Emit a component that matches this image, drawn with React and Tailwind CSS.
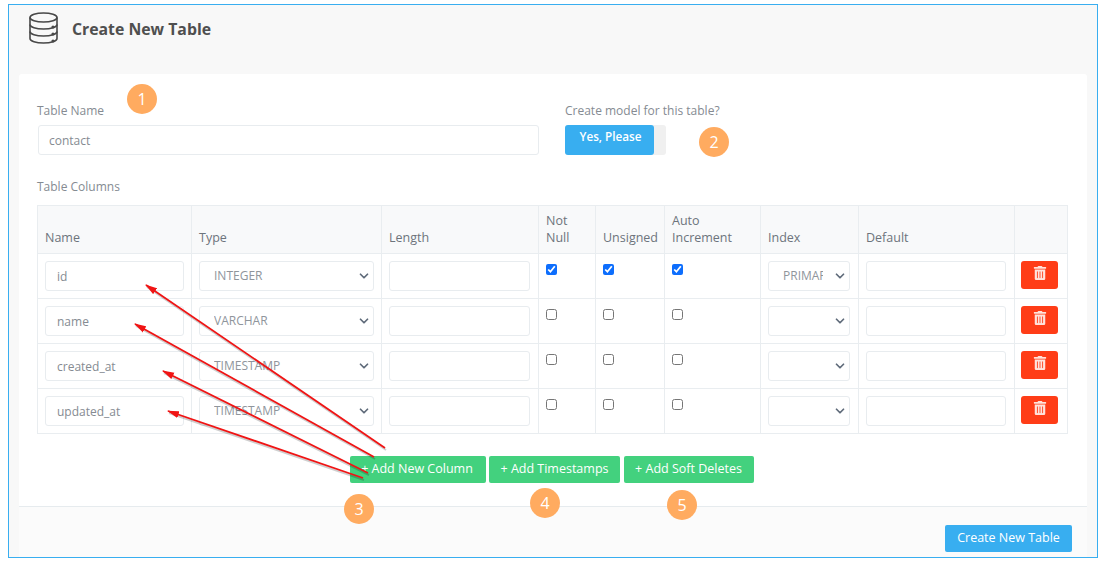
import { FaTrashAlt } from 'react-icons/fa';
import { FiChevronDown } from 'react-icons/fi';

const rows = [
  { name: 'id', type: 'INTEGER', index: 'PRIMARY', checked: true },
  { name: 'name', type: 'VARCHAR', index: '', checked: false },
  { name: 'created_at', type: 'TIMESTAMP', index: '', checked: false },
  { name: 'updated_at', type: 'TIMESTAMP', index: '', checked: false },
];

const badges = [
  { n: 1, cls: 'left-[127px] top-[84px]' },
  { n: 2, cls: 'left-[699px] top-[127px]' },
  { n: 3, cls: 'left-[344px] top-[494px]' },
  { n: 4, cls: 'left-[530px] top-[488px]' },
  { n: 5, cls: 'left-[667px] top-[490px]' },
];

const arrows = [
  [385, 448, 146, 285],
  [374, 457, 135, 324],
  [368, 473, 163, 371],
  [363, 478, 168, 411],
];

const inputCls =
  'h-[30px] w-full rounded-[3px] border border-[#e8ecef] bg-white px-[10px] text-[12px] text-[#858b92] outline-none';
const rowInputCls =
  'h-[30px] w-full rounded-[3px] border border-[#e8ecef] bg-white px-[11px] text-[12px] text-[#858b92] outline-none';

const Select = ({ value, pad }) => (
  <div className="relative">
    <select
      defaultValue={value}
      className={`h-[30px] w-full appearance-none rounded-[3px] border border-[#e8ecef] bg-white text-[12px] text-[#8f959c] outline-none ${pad}`}
    >
      <option value={value}>{value}</option>
    </select>
    <FiChevronDown className="pointer-events-none absolute right-[3px] top-[8px] text-[14px] text-[#5f6b7a]" strokeWidth={3} />
  </div>
);

const Check = ({ checked }) => (
  <input
    type="checkbox"
    defaultChecked={checked}
    className="m-0 block h-[11px] w-[11px] accent-[#0d6efd]"
  />
);

const Badge = ({ n, cls }) => (
  <div
    className={`absolute flex h-[30px] w-[30px] items-center justify-center rounded-full bg-[#ffab60] text-[16px] text-white ${cls}`}
  >
    {n}
  </div>
);

const thCls = 'border border-[#e9edf0] px-[7px] pb-[7px] align-bottom text-left text-[12.5px] font-normal leading-[17px] text-[#6d747c]';
const tdCls = 'border border-[#e9edf0] px-[7px] align-middle';
const tdNarrowCls = 'border border-[#e9edf0] pl-[7px] pr-[8px] align-middle';
const checkCls = 'border border-[#e9edf0] px-[7px] pt-[10px] align-top';

const App = () => {
  return (
    <div
      className="relative h-[562px] w-[1107px] overflow-hidden bg-white pl-2 pt-1"
      style={{ fontFamily: '"Open Sans", sans-serif' }}
    >
      <div className="flex h-[554px] w-[1090px] flex-col border border-[#39aef0] bg-[#f8f8f8] pl-[10px] pr-[10px]">
        <div className="flex h-[69px] shrink-0 items-start gap-[14px] pl-[10px] pt-[7px]">
          <svg width="29" height="32" viewBox="0 0 29 32" fill="none" stroke="#484848" strokeWidth="1.6">
            <ellipse cx="14.5" cy="5.5" rx="13.5" ry="4.5" />
            <path d="M1 5.5v21c0 2.500 6 4.500 13.500 4.500s13.500-2 13.500-4.500v-21" />
            <path d="M1 12.500c0 2.500 6 4.500 13.500 4.500s13.500-2 13.500-4.500" />
            <path d="M1 19.500c0 2.500 6 4.500 13.500 4.500s13.500-2 13.500-4.500" />
            <circle cx="24" cy="15" r="0.8" fill="#484848" />
            <circle cx="24" cy="22" r="0.8" fill="#484848" />
            <circle cx="24" cy="29" r="0.8" fill="#484848" />
          </svg>
          <h1 className="mt-[6px] text-[15.8px] font-bold leading-[22px] text-[#4f4f4f]">Create New Table</h1>
        </div>

        <div className="flex flex-1 flex-col rounded-t-[3px] bg-white">
          <div className="flex-1 pl-[19px] pr-[19px] pt-[28px]">
            <div className="flex">
              <div className="w-[501px]">
                <div className="mb-[5px] text-[12px] leading-[18px] text-[#858b92] -ml-px">Table Name</div>
                <input className={inputCls} defaultValue="contact" />
              </div>
              <div className="ml-[26px]">
                <div className="mb-[5px] text-[12px] leading-[18px] text-[#858b92]">Create model for this table?</div>
                <div className="flex h-[30px] w-[101px] overflow-hidden rounded-[3px] bg-[#f0f0f0]">
                  <div className="w-[89px] rounded-r-[3px] bg-[#38aef0] pl-[2px] pt-[2px] text-center text-[11.7px] font-semibold leading-[18px] text-white">
                    Yes, Please
                  </div>
                </div>
              </div>
            </div>

            <div className="mt-[23px] mb-[9px] text-[12px] leading-[18px] text-[#858b92] -ml-px">Table Columns</div>

            <table className="-ml-px w-[1030px] table-fixed border-collapse">
              <colgroup>
                <col className="w-[154px]" />
                <col className="w-[190px]" />
                <col className="w-[157px]" />
                <col className="w-[57px]" />
                <col className="w-[69px]" />
                <col className="w-[96px]" />
                <col className="w-[98px]" />
                <col className="w-[156px]" />
                <col className="w-[53px]" />
              </colgroup>
              <thead className="bg-[#f8f9fa]">
                <tr className="h-[48px]">
                  <th className={thCls}>Name</th>
                  <th className={thCls}>Type</th>
                  <th className={thCls}>Length</th>
                  <th className={thCls}>Not Null</th>
                  <th className={thCls}>Unsigned</th>
                  <th className={thCls}>Auto Increment</th>
                  <th className={thCls}>Index</th>
                  <th className={thCls}>Default</th>
                  <th className={thCls}></th>
                </tr>
              </thead>
              <tbody>
                {rows.map((row) => (
                  <tr key={row.name} className="h-[45px]">
                    <td className={tdCls}>
                      <input className={rowInputCls} defaultValue={row.name} />
                    </td>
                    <td className={tdCls}>
                      <Select value={row.type} pad="pl-[14px] pr-[22px]" />
                    </td>
                    <td className={tdNarrowCls}>
                      <input className={rowInputCls} />
                    </td>
                    <td className={checkCls}>
                      <Check checked={row.checked} />
                    </td>
                    <td className={checkCls}>
                      <Check checked={row.checked} />
                    </td>
                    <td className={checkCls}>
                      <Check checked={row.checked} />
                    </td>
                    <td className={tdNarrowCls}>
                      <Select value={row.index} pad="pl-[14px] pr-[26px]" />
                    </td>
                    <td className={tdNarrowCls}>
                      <input className={rowInputCls} />
                    </td>
                    <td className="border border-[#e9edf0] pb-[9px] pl-[6px] pr-[7px] pt-[7px] align-top">
                      <button className="flex h-[28px] w-[37px] items-start justify-center rounded-[3px] bg-[#ff3d17] pt-[5px] text-[14px] text-[#ffe3dc]">
                        <FaTrashAlt />
                      </button>
                    </td>
                  </tr>
                ))}
              </tbody>
            </table>

            <div className="mt-[22px] flex gap-[3px] pl-[312px]">
              <button className="h-[27px] w-[136px] rounded-[2px] bg-[#43d17e] pr-[2px] text-[12.5px] text-white">+ Add New Column</button>
              <button className="h-[27px] w-[131px] rounded-[2px] bg-[#43d17e] text-[12.5px] text-white">+ Add Timestamps</button>
              <button className="ml-[1px] h-[27px] w-[130px] rounded-[2px] bg-[#43d17e] pr-[1px] text-[12.5px] text-white">+ Add Soft Deletes</button>
            </div>
          </div>

          <div className="flex h-[51px] shrink-0 items-start justify-end border-t border-[#e6ebee] bg-[#fbfbfb] pr-[15px] pt-[18px]">
            <button className="h-[27px] w-[127px] rounded-[2px] bg-[#38aef0] text-[12.5px] font-medium text-white">Create New Table</button>
          </div>
        </div>
      </div>

      {/* annotations drawn over the screenshot */}
      <svg className="pointer-events-none absolute left-0 top-0" width="1107" height="562">
        <defs>
          <marker id="head" markerUnits="userSpaceOnUse" markerWidth="12" markerHeight="8" refX="11" refY="4" orient="auto">
            <path d="M0 0.500L12 4L0 7.500z" fill="#f01414" />
          </marker>
        </defs>
        {arrows.map(([x1, y1, x2, y2]) => (
          <g key={y2}>
            <line x1={x1 + 1} y1={y1 + 2} x2={x2 + 1} y2={y2 + 2} stroke="#00000030" strokeWidth="2" />
            <line x1={x1} y1={y1} x2={x2} y2={y2} stroke="#f01414" strokeWidth="1.8" markerEnd="url(#head)" />
          </g>
        ))}
      </svg>
      {badges.map((b) => (
        <Badge key={b.n} n={b.n} cls={b.cls} />
      ))}
    </div>
  );
};

export default App;
